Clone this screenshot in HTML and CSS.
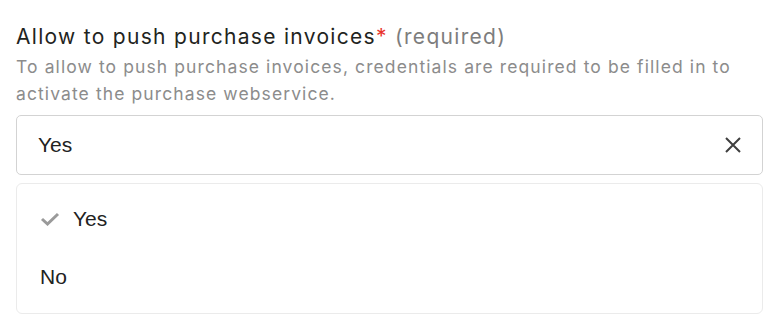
FILE: index.html
```html
<html>
	<head>
		<link rel="stylesheet" href="styles.css">
	</head>
	<body>
		<div class="field">
			<div class="label">
				Allow to push purchase invoices<span class="star">*</span>
				<span class="req">(required)</span>
			</div>
			<div class="hint">
				To allow to push purchase invoices, credentials are required to be filled in to
				activate the purchase webservice.
			</div>
			<div class="select">
				<span class="value">Yes</span>
				<svg class="clear" width="18" height="18" viewBox="0 0 18 18">
					<path d="M2 2L16 16M16 2L2 16" stroke="#3f3f3f" stroke-width="2" fill="none"/>
				</svg>
			</div>
			<div class="menu">
				<div class="option selected">
					<svg class="check" width="20" height="14" viewBox="0 0 20 14">
						<path d="M2 7L7.5 12L18 2" stroke="#9a9a9a" stroke-width="3" fill="none"/>
					</svg>
					Yes
				</div>
				<div class="option">No</div>
			</div>
		</div>
	</body>
</html>
```

FILE: styles.css
```css
body,
html {
	margin: 0;
	background-color: #ffffff;
}

.field {
	padding: 22px 15px 0 16px;
	font-family: "Inter", "Liberation Sans", sans-serif;
}

.label {
	font-size: 21px;
	line-height: 30px;
	color: #1f2421;
	letter-spacing: 1.3px;
}

.star {
	color: #e8322b;
}

.req {
	color: #7d7d7d;
}

.hint {
	margin-top: 1px;
	font-size: 17.5px;
	line-height: 27px;
	color: #8c8c8c;
	letter-spacing: 1.1px;
}

.select {
	margin-top: 8px;
	height: 58px;
	border: 1px solid #d3d3d3;
	border-radius: 5px;
	display: flex;
	align-items: center;
	justify-content: space-between;
	padding: 0 20px 0 21px;
	font-family: "Liberation Sans", sans-serif;
	font-size: 21px;
	color: #222222;
}

.menu {
	margin-top: 8px;
	border: 1px solid #ebebeb;
	border-radius: 6px;
	padding: 6px 0 7px;
	font-family: "Liberation Sans", sans-serif;
	font-size: 21px;
	color: #222222;
}

.option {
	height: 58px;
	display: flex;
	align-items: center;
	padding-left: 23px;
}

.check {
	margin-right: 13px;
}
```
